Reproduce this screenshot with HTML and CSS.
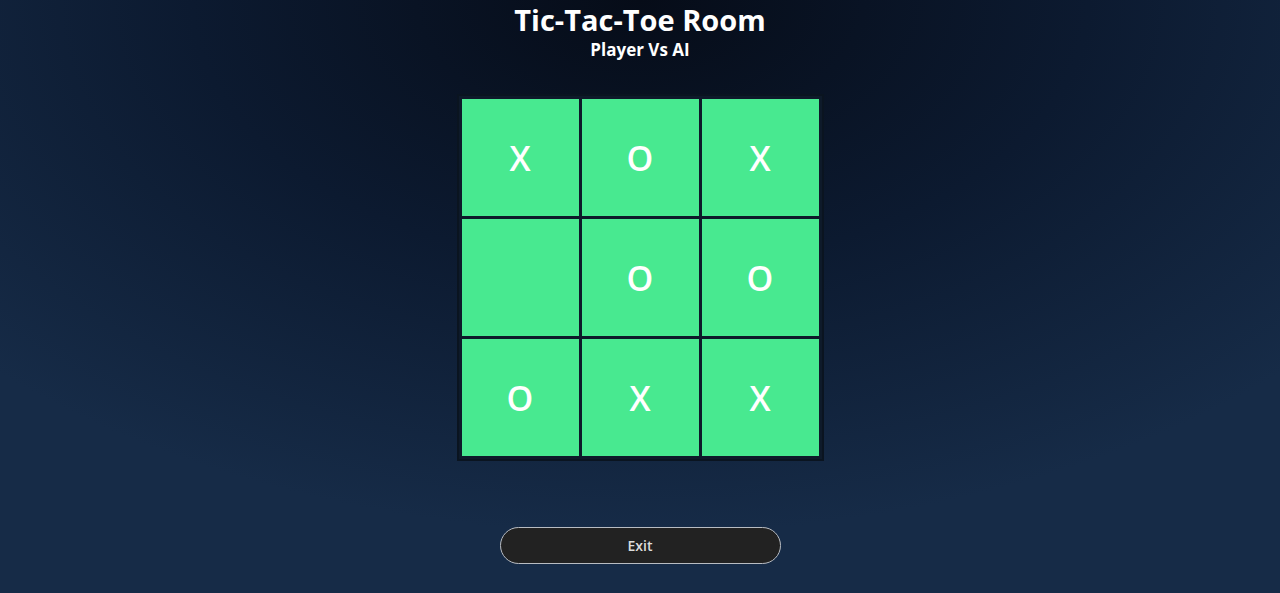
FILE: index.html
```html
<!DOCTYPE html>
<html>
<head>
<meta charset="utf-8">
<link rel="stylesheet" href="styles.css">
</head>
<body>
<div class="page">
  <h1 class="title">Tic-Tac-Toe Room</h1>
  <div class="subtitle">Player Vs AI</div>
  <div class="board">
    <div class="cell">X</div>
    <div class="cell">O</div>
    <div class="cell">X</div>
    <div class="cell"></div>
    <div class="cell">O</div>
    <div class="cell">O</div>
    <div class="cell">O</div>
    <div class="cell">X</div>
    <div class="cell">X</div>
  </div>
  <button class="exit">Exit</button>
</div>
</body>
</html>
```

FILE: styles.css
```css
html, body {
  margin: 0;
  height: 100%;
}
body {
  background: radial-gradient(ellipse 70% 90% at 50% 0%, #060c18 0%, #0c1a30 50%, #162b47 100%);
  font-family: "Open Sans", "Noto Sans", sans-serif;
  color: #fff;
  overflow: hidden;
}
.page {
  display: flex;
  flex-direction: column;
  align-items: center;
}
.title {
  margin: 2px 0 0;
  font-size: 29px;
  line-height: 36px;
  font-weight: 700;
}
.subtitle {
  font-size: 17px;
  font-weight: 700;
  line-height: 22px;
  margin-top: 1px;
}
.board {
  margin-top: 33px;
  display: grid;
  grid-template-columns: repeat(3, 117px);
  grid-template-rows: repeat(3, 117px);
  gap: 3px;
  padding: 3px;
  background: #0e1a2a;
  border: 2px solid #0a1420;
}
.cell {
  background: #48e990;
  display: flex;
  align-items: center;
  justify-content: center;
  font-size: 34px;
  font-weight: 600;
  color: #fff;
}
.exit {
  margin-top: 66px;
  width: 281px;
  height: 37px;
  border-radius: 19px;
  background: #222222;
  border: 1px solid #b8bcc2;
  color: #dcdcdc;
  font-family: "Open Sans", "Noto Sans", sans-serif;
  font-size: 14px;
  font-weight: 600;
}
```
